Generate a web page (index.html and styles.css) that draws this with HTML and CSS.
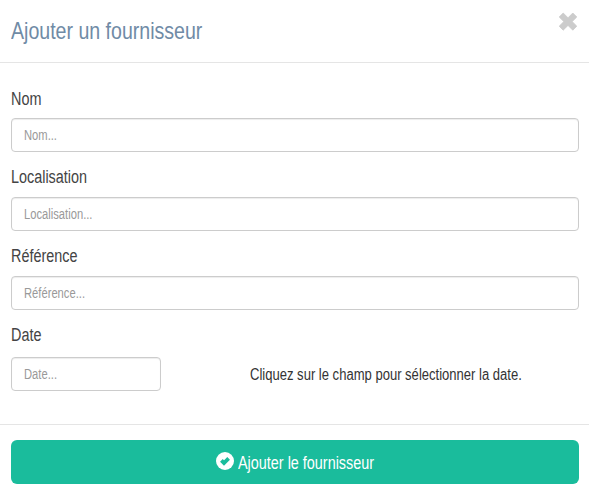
FILE: index.html
```html
<!DOCTYPE html>
<html lang="fr">
<head>
<meta charset="utf-8">
<title>Ajouter un fournisseur</title>
<link rel="stylesheet" href="styles.css">
</head>
<body>
<form class="modal">
  <header class="modal-header">
    <h1 class="title">Ajouter un fournisseur</h1>
    <button type="button" class="close" aria-label="Fermer">
      <svg width="20" height="20" viewBox="0 0 20 20"><path d="M5.2 2 10 6.8 14.8 2 18.8 6 14.2 10.6 18.8 15.2 14.8 19.2 10 14.4 5.2 19.2 1.2 15.2 5.8 10.6 1.2 6Z"/></svg>
    </button>
  </header>
  <main class="modal-body">
    <div class="group"><label class="label" for="nom">Nom</label><div class="field"><input class="input" id="nom" placeholder="Nom..."></div></div>
    <div class="group"><label class="label raised" for="loc">Localisation</label><div class="field"><input class="input" id="loc" placeholder="Localisation..."></div></div>
    <div class="group"><label class="label raised" for="ref">Référence</label><div class="field"><input class="input" id="ref" placeholder="Référence..."></div></div>
    <div class="group"><label class="label label-date" for="date">Date</label>
      <div class="date-row"><div class="field field-date"><input class="input" id="date" placeholder="Date..."></div><span class="hint">Cliquez sur le champ pour sélectionner la date.</span></div>
    </div>
  </main>
  <footer class="modal-footer">
    <button type="button" class="submit">
      <svg class="check" width="18" height="18" viewBox="0 0 18 18"><circle cx="9" cy="9" r="9"/><path d="M5.4 8.4 8 11 12.6 6.4"/></svg>
      <span class="submit-text">Ajouter le fournisseur</span>
    </button>
  </footer>
</form>
</body>
</html>
```
FILE: styles.css
```css
* { box-sizing: border-box; }
body { margin: 0; background: #fff; color: #333; font-family: "Liberation Sans", sans-serif; }
.modal-header { display: flex; justify-content: space-between; height: 63px; padding: 11px 11px 0; border-bottom: 1px solid #e5e5e5; }
/* Condensed lettering */
.title, .label, .input, .hint, .submit-text { transform: scaleX(.8); transform-origin: 0 50%; }
.title { margin: 0; color: #708ba6; font-size: 24px; font-weight: 400; line-height: 40px; transform: scaleX(.815); }
.close { width: 20px; height: 20px; padding: 0; border: 0; background: none; }
.close svg { display: block; }
.close path { fill: #ccc; stroke: #ccc; stroke-width: .8; stroke-linejoin: round; }
.modal-body { height: 361px; padding: 24px 10px 0 11px; }
.group { height: 79px; }
.label { display: block; height: 31px; color: #444; font-size: 18px; line-height: 25px; }
.raised { line-height: 23px; }
.label-date { height: 33px; line-height: 23px; }
.field { width: 100%; height: 34px; padding: 0 12px; overflow: hidden; border: 1px solid #ccc; border-radius: 4px; box-shadow: inset 0 1px 1px rgba(0,0,0,.075); }
.field-date { width: 150px; }
.input { display: block; width: 125%; height: 32px; padding: 0; border: 0; outline: 0; background: transparent; font: 14px "Liberation Sans", sans-serif; }
.input::placeholder { color: #999; opacity: 1; }
.date-row { display: flex; align-items: center; }
.hint { margin-left: 89px; padding-top: 2px; width: 250px; font-size: 16px; white-space: nowrap; transform: scaleX(.815); }
.modal-footer { padding: 15px 10px 12px 11px; border-top: 1px solid #e5e5e5; }
.submit { display: flex; align-items: center; justify-content: center; gap: 4px; width: 100%; height: 44px; padding: 0 0 2px; border: 0; border-radius: 6px; background: #1abc9c; color: #fff; font: 18px "Liberation Sans", sans-serif; }
.submit-text { width: 136px; padding-top: 4px; text-align: left; white-space: nowrap; }
.check circle { fill: #fff; }
.check path { fill: none; stroke: #1abc9c; stroke-width: 3.8; }
```
